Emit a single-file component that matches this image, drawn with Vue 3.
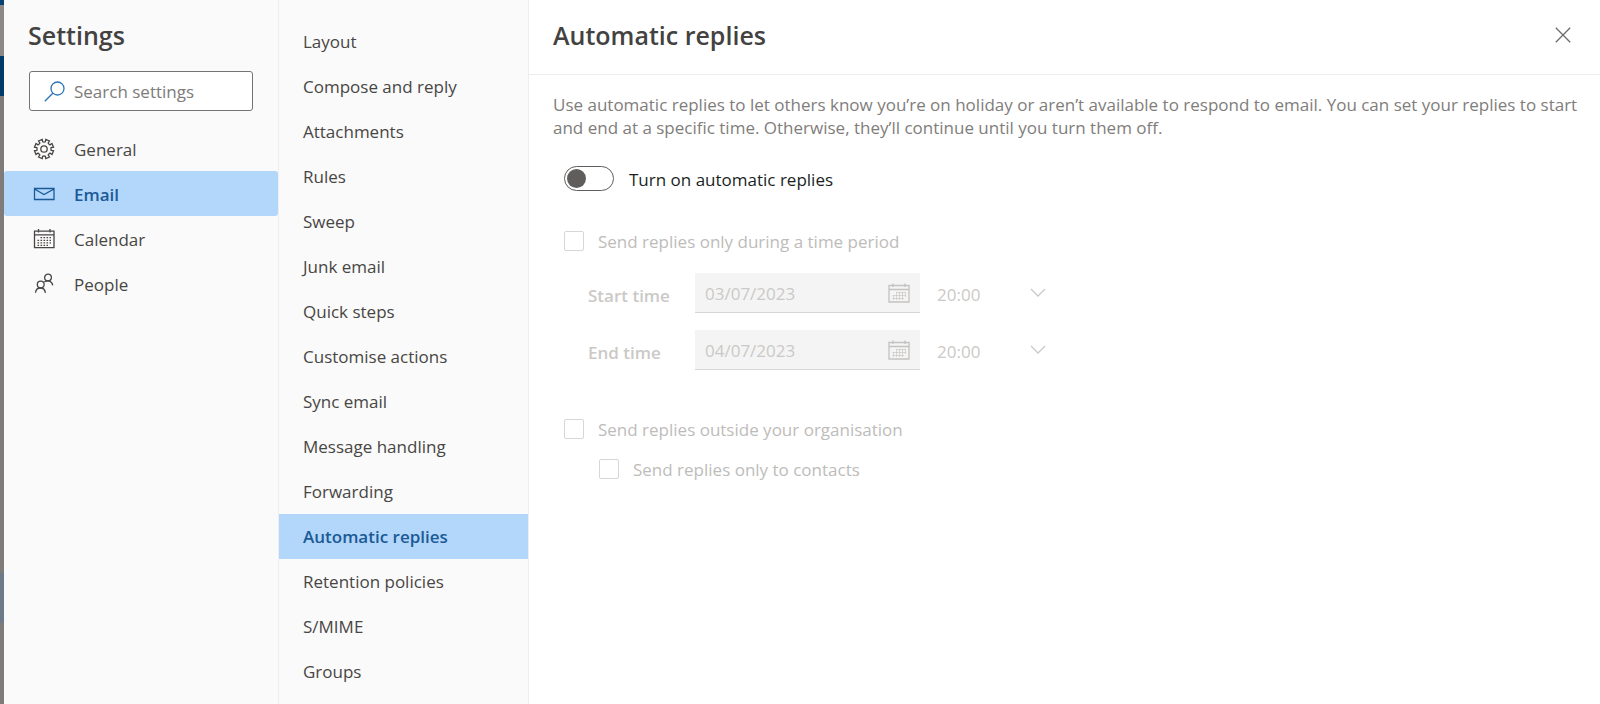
<script setup>
import { ref } from 'vue'

const categories = ['General', 'Email', 'Calendar', 'People']
const sections = [
  'Layout', 'Compose and reply', 'Attachments', 'Rules', 'Sweep', 'Junk email', 'Quick steps',
  'Customise actions', 'Sync email', 'Message handling', 'Forwarding', 'Automatic replies',
  'Retention policies', 'S/MIME', 'Groups',
]
const periods = [
  { id: 'start', label: 'Start time', date: '03/07/2023', time: '20:00' },
  { id: 'end', label: 'End time', date: '04/07/2023', time: '20:00' },
]
const category = ref('Email')
const section = ref('Automatic replies')
const search = ref('')
const enabled = ref(false)

const teeth = Array.from({ length: 8 }, (_, i) => i * 45 + 22.5)
const gear = teeth.map((deg, i) => {
  const p = (r, a) => {
    const t = ((deg + a) * Math.PI) / 180
    return `${(11 + r * Math.cos(t)).toFixed(2)} ${(11 + r * Math.sin(t)).toFixed(2)}`
  }
  return `${i ? 'L' : 'M'}${p(7.3, -12)}L${p(9.7, -12)}L${p(9.7, 12)}L${p(7.3, 12)}L${p(6.9, 22.5)}`
}).join('') + 'Z'
</script>

<template>
  <div class="page">
    <div class="backdrop" aria-hidden="true">
      <i class="top"></i><i class="bar"></i><i class="ribbon"></i><i class="body"></i><i class="row"></i><i class="rest"></i>
    </div>

    <aside class="sidebar">
      <h1>Settings</h1>
      <label class="search">
        <svg width="21" height="21" viewBox="0 0 21 21" aria-hidden="true">
          <circle cx="13.5" cy="7.5" r="6.5" /><path d="M8.8 12.2L.8 20.2" />
        </svg>
        <input v-model="search" type="text" placeholder="Search settings" aria-label="Search settings" />
      </label>
      <nav aria-label="Categories">
        <button
          v-for="c in categories" :key="c" type="button" class="category"
          :class="{ selected: c === category }" @click="category = c"
        >
          <svg width="22" height="22" viewBox="0 0 22 22" aria-hidden="true">
            <template v-if="c === 'General'">
              <path :d="gear" /><circle cx="11" cy="11" r="3.2" />
            </template>
            <path v-else-if="c === 'Email'" d="M1.5 5.5H21V16.5H1.5ZM1.5 6L11 11.5L21 6" />
            <template v-else-if="c === 'Calendar'">
              <path d="M1.5 3.2H21V19.7H1.5ZM1.5 6.8H21M5.5 1V4.5M17 1V4.5" />
              <path class="dots" d="M7.5 9.7H18M4.5 12.3H18M4.5 14.9H18M4.5 17.3H15" />
            </template>
            <template v-else>
              <circle cx="15" cy="4.6" r="3.4" /><circle cx="7.7" cy="11.6" r="3.4" />
              <path d="M2.5 19.8C3.2 13.4 11.6 13.4 12.4 19.8M11.4 8.9C14.2 6.9 19 7.8 19.7 12.3" />
            </template>
          </svg>
          <span>{{ c }}</span>
        </button>
      </nav>
    </aside>

    <nav class="sections" aria-label="Email settings">
      <button
        v-for="s in sections" :key="s" type="button"
        :class="{ selected: s === section }" @click="section = s"
      >{{ s }}</button>
    </nav>

    <main>
      <header>
        <h2>Automatic replies</h2>
        <button type="button" class="close" aria-label="Close">
          <svg width="16" height="16" viewBox="0 0 16 16" aria-hidden="true"><path d="M.8.8L15.2 15.2M15.2.8L.8 15.2" /></svg>
        </button>
      </header>
      <div class="content">
        <p>Use automatic replies to let others know you’re on holiday or aren’t available to respond to email. You can set your replies to start and end at a specific time. Otherwise, they’ll continue until you turn them off.</p>
        <label class="toggle">
          <input v-model="enabled" type="checkbox" role="switch" />
          <span>Turn on automatic replies</span>
        </label>

        <fieldset :disabled="!enabled">
          <label class="check"><input type="checkbox" /><span>Send replies only during a time period</span></label>
          <div class="periods">
            <div v-for="p in periods" :key="p.id" class="period">
              <label :for="p.id">{{ p.label }}</label>
              <div class="date">
                <input :id="p.id" type="text" :value="p.date" />
                <svg width="22" height="22" viewBox="0 0 22 22" aria-hidden="true">
                  <path d="M1 3.5H21V20H1ZM1 7.5H21M5 1.5V5M17 1.5V5" />
                  <path class="grid" d="M8 10.5H18M4.5 13.5H18M4.5 16.5H16M5.5 13V18M8.5 10V18M11.5 10V18M14.5 10V18M17.5 10V15" />
                </svg>
              </div>
              <div class="time">
                <select :aria-label="p.label + ' hour'"><option>{{ p.time }}</option></select>
                <svg width="16" height="10" viewBox="0 0 16 10" aria-hidden="true"><path d="M1 1L8 8L15 1" /></svg>
              </div>
            </div>
          </div>
          <label class="check"><input type="checkbox" /><span>Send replies outside your organisation</span></label>
          <label class="check nested"><input type="checkbox" /><span>Send replies only to contacts</span></label>
        </fieldset>
      </div>
    </main>
  </div>
</template>

<style>
body { background: #fff; }
</style>

<style scoped>
* { box-sizing: border-box; }
.page {
  display: flex;
  min-height: 100vh;
  font: 17px/23px "Open Sans", "Noto Sans", sans-serif;
  color: #484644;
}
button, input, select { font: inherit; color: inherit; border: 0; margin: 0; background: none; }
svg { flex: none; fill: none; stroke: currentColor; stroke-width: 1.3; }
.backdrop { width: 4px; flex: none; display: flex; flex-direction: column; background: #7f7b78; }
.backdrop i { display: block; }
.top { height: 5px; background: #084272; }
.bar { height: 51px; background: #8b8886; }
.ribbon { height: 40px; background: #003b68; }
.body { flex: 477; }
.row { flex: 50; background: #6d7b89; }
.rest { flex: 81; }

.sidebar { width: 275px; flex: none; background: #fafafa; border-right: 1px solid #eee; }
h1, h2 { margin: 0; font-size: 25px; line-height: 34px; font-weight: 600; color: #434241; }
h1 { padding: 18px 24px 19px; }
.search {
  display: flex; align-items: center; gap: 9px; height: 40px; margin: 0 25px 15px; padding: 0 14px;
  background: #fff; border: 1px solid #767472; border-radius: 3px;
}
.search svg { color: #2b74b8; }
.search input { flex: 1; min-width: 0; padding: 0; outline: 0; }
.search input::placeholder { color: #7d7b79; opacity: 1; }
.category {
  display: flex; align-items: center; gap: 19px; width: 100%; height: 45px; padding: 0 29px;
  text-align: left; border-radius: 3px;
}
.category span { padding-top: 2px; }
.selected { background: #b3d6fb; color: #1b5a96; font-weight: 600; }
.dots { stroke-dasharray: 1.6 1.4; }

.sections { width: 250px; flex: none; padding-top: 19px; background: #fafafa; border-right: 1px solid #eee; }
.sections button { display: block; width: 100%; height: 45px; padding: 0 24px; text-align: left; }

main { flex: 1; min-width: 0; background: #fff; }
header { display: flex; align-items: center; justify-content: space-between; height: 75px; padding: 0 24px 4px; border-bottom: 1px solid #ececec; }
.close { display: grid; place-items: center; width: 26px; height: 26px; padding: 0; color: #6e6c6a; }
.content { padding: 18px 6px 18px 24px; }
p { margin: 0; max-width: 1035px; color: #7f7d7b; }
.toggle { display: flex; align-items: center; gap: 15px; margin: 27px 0 0 11px; color: #201f1e; }
.toggle input {
  appearance: none; flex: none; display: flex; align-items: center; width: 50px; height: 25px; padding: 2px;
  border: 1px solid #605e5c; border-radius: 13px;
}
.toggle span, .check span { padding-top: 2px; }
.toggle input::before { content: ""; width: 19px; height: 19px; border-radius: 50%; background: #605e5c; }
.toggle input:checked { justify-content: flex-end; }
fieldset { margin: 37px 0 0; padding: 0 0 0 11px; border: 0; min-width: 0; color: #bebcba; }
.check { display: flex; align-items: center; gap: 14px; }
.check input { appearance: none; flex: none; width: 20px; height: 20px; border: 1px solid #d8d6d4; border-radius: 2px; }
.nested { margin: 15px 0 0 35px; }
.periods { display: flex; flex-direction: column; gap: 17px; margin: 20px 0 46px 24px; }
.period { display: flex; align-items: center; color: #cbc9c7; }
.period > label { width: 107px; padding-top: 4px; font-weight: 600; }
.date { display: flex; align-items: center; width: 225px; height: 40px; padding: 0 10px; background: #f4f4f4; border-bottom: 1px solid #d8d6d4; }
.date input { flex: 1; min-width: 0; padding: 2px 0 0; }
.date svg { color: #c4c2c0; }
.grid { stroke-width: 1; opacity: .6; }
.time { display: grid; align-items: center; width: 142px; padding: 0 16px 0 17px; }
.time > * { grid-area: 1 / 1; }
.time select { appearance: none; width: 100%; padding: 2px 0 0; opacity: 1; }
.time svg { justify-self: end; pointer-events: none; }
</style>
